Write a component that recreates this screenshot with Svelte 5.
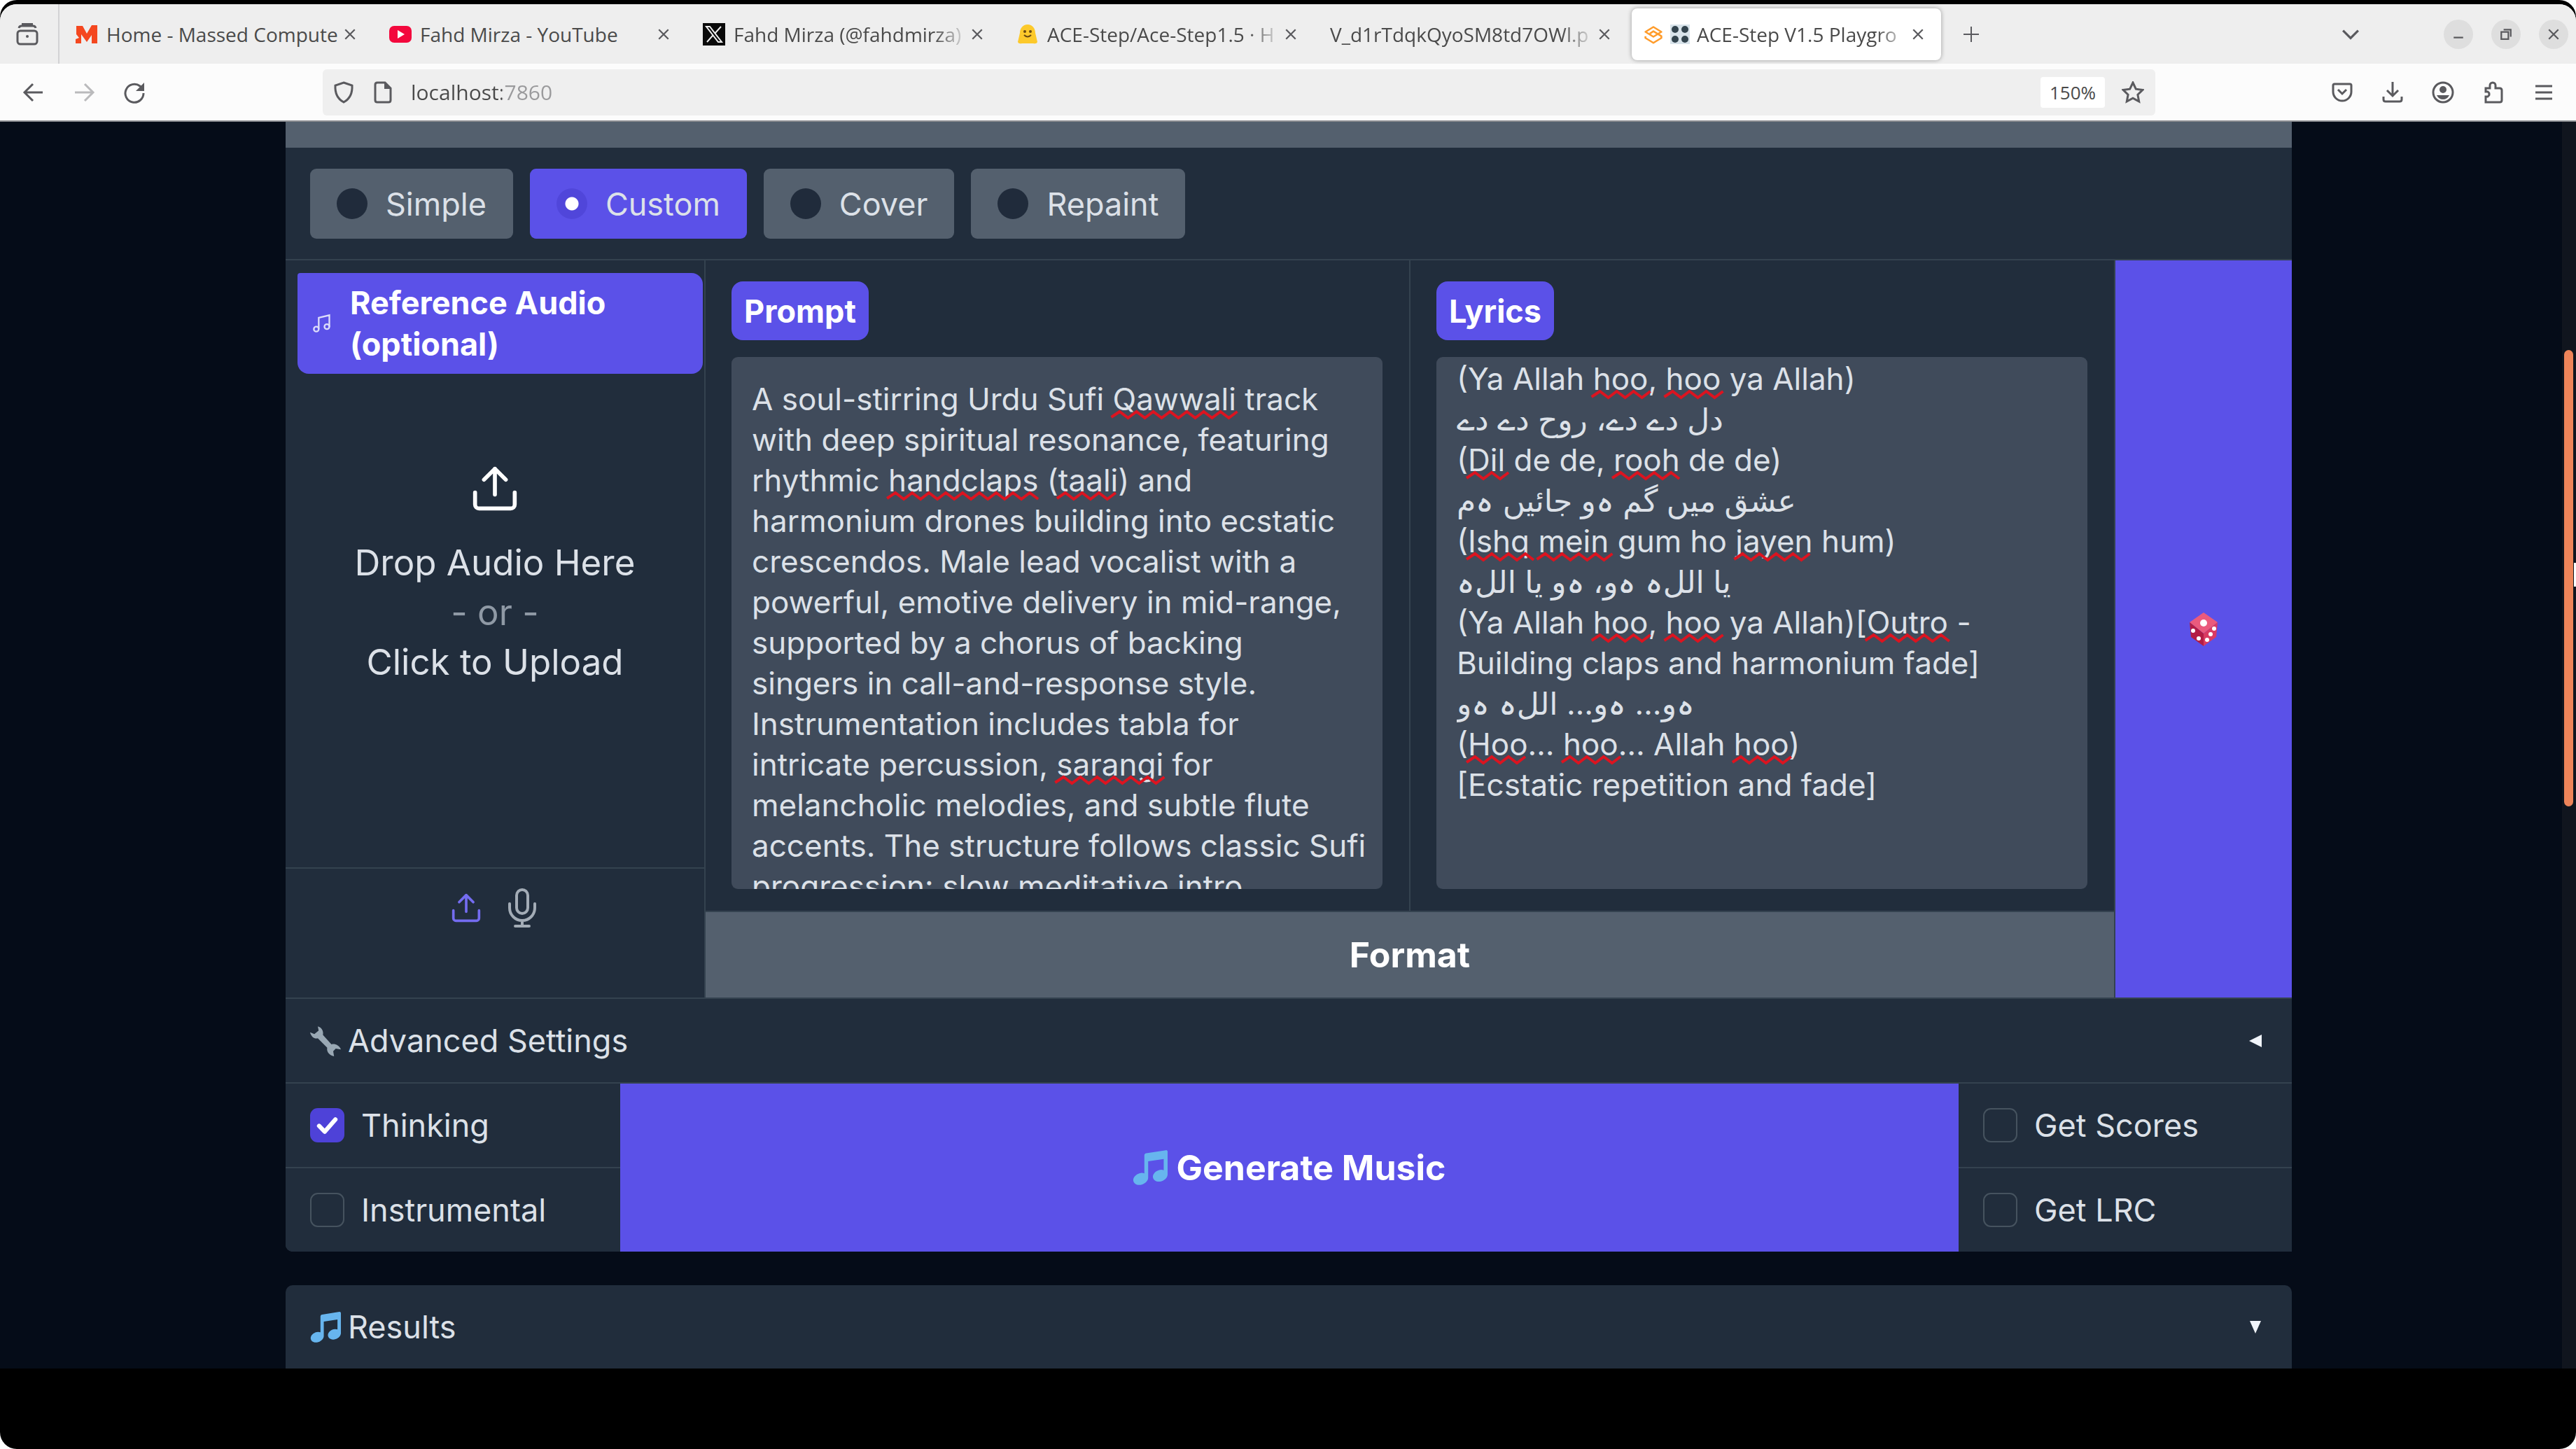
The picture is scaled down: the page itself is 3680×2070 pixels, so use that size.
<script lang="ts">
  import { onMount } from 'svelte';

  type Mark = { x: number; y: number; w: number };

  const LINE = 58;
  const TEXT_FONT = '44px Inter';

  const tabs = [
    { title: 'Home - Massed Compute', icon: 'massed' },
    { title: 'Fahd Mirza - YouTube', icon: 'youtube' },
    { title: 'Fahd Mirza (@fahdmirza)', icon: 'x', fade: true },
    { title: 'ACE-Step/Ace-Step1.5 · H', icon: 'hugging', fade: true },
    { title: 'V_d1rTdqkQyoSM8td7OWl.p', icon: '', fade: true },
    { title: 'ACE-Step V1.5 Playgro', icon: 'ace', fade: true, active: true },
  ];

  const modes = ['Simple', 'Custom', 'Cover', 'Repaint'];
  let mode = $state('Custom');

  // words between ~ get the spell-check squiggle
  const promptLines = [
    'A soul-stirring Urdu Sufi ~Qawwali~ track',
    'with deep spiritual resonance, featuring',
    'rhythmic ~handclaps~ (~taali~) and',
    'harmonium drones building into ecstatic',
    'crescendos. Male lead vocalist with a',
    'powerful, emotive delivery in mid-range,',
    'supported by a chorus of backing',
    'singers in call-and-response style.',
    'Instrumentation includes tabla for',
    'intricate percussion, ~sarangi~ for',
    'melancholic melodies, and subtle flute',
    'accents. The structure follows classic Sufi',
    'progression: slow meditative intro,',
  ];

  const lyricLines = [
    '(Ya Allah ~hoo~, ~hoo~ ya Allah)',
    'دل دے دے، روح دے دے',
    '(~Dil~ de de, ~rooh~ de de)',
    'عشق میں گم ہو جائیں ہم',
    '(~Ishq~ ~mein~ gum ho ~jayen~ hum)',
    'یا اللہ ہو، ہو یا اللہ',
    '(Ya Allah ~hoo~, ~hoo~ ya Allah)[~Outro~ -',
    'Building claps and harmonium fade]',
    'ہو… ہو… اللہ ہو',
    '(~Hoo~… ~hoo~… Allah ~hoo~)',
    '[Ecstatic repetition and fade]',
  ];

  // the heh is set unjoined, with a non-joiner on both sides
  const plain = (lines: string[]) =>
    lines.join('\n').replaceAll('~', '').replaceAll('ہ', '\u200cہ\u200c');

  let prompt = $state(plain(promptLines));
  let lyrics = $state(plain(lyricLines));
  let promptMarks: Mark[] = $state([]);
  let lyricMarks: Mark[] = $state([]);

  let thinking = $state(true);
  let instrumental = $state(false);
  let scores = $state(false);
  let lrc = $state(false);

  function measureMarks(lines: string[]): Mark[] {
    const ctx = document.createElement('canvas').getContext('2d');
    if (!ctx) return [];
    ctx.font = TEXT_FONT;
    const marks: Mark[] = [];
    lines.forEach((line, row) => {
      let before = '';
      line.split('~').forEach((part, i) => {
        if (i % 2) {
          marks.push({ x: ctx.measureText(before).width, y: row * LINE + 46, w: ctx.measureText(part).width });
        }
        before += part;
      });
    });
    return marks;
  }

  // zigzag from x to x + w, 24px per wave
  function zigzag({ x, y, w }: Mark) {
    let d = `M${x - 2} ${y + 9}`;
    for (let dx = 10, up = true; dx <= w + 6; dx += 12, up = !up) d += `L${x + dx} ${up ? y + 1 : y + 10}`;
    return d;
  }

  onMount(() => {
    promptMarks = measureMarks(promptLines);
    lyricMarks = measureMarks(lyricLines);
  });
</script>

{#snippet squiggles(marks: Mark[])}
  <svg class="squiggles" aria-hidden="true">
    {#each marks as mark}
      <path d={zigzag(mark)} />
    {/each}
  </svg>
{/snippet}

{#snippet notes()}
  <svg class="emoji" viewBox="0 0 36 36" aria-hidden="true">
    <path fill="#67b5ee" d="M34.2 0.1 14 3.2c-1 .2-1.9 1-1.9 2.1v18.6a8 8 0 0 0-4.600-.2C3 25 0 28.400.8 31.900c.8 3.300 4.700 4.800 8.800 3.500 3.700-1.200 6.400-4.200 6.400-7V11.500l16-2.400v11.600a8 8 0 0 0-4.600-.2c-4.300 1.200-7.200 4.700-6.400 8 .8 3.300 4.700 4.800 8.800 3.500 3.700-1.200 6.200-4.100 6.200-7V1.700C36 .6 35.200-.1 34.200.1z" />
  </svg>
{/snippet}

{#snippet uploadIcon()}
  <svg viewBox="0 0 24 24" aria-hidden="true">
    <path d="M12 15V2M6.500 7.500 12 2l5.500 5.500M2 14v6a2 2 0 0 0 2 2h16a2 2 0 0 0 2-2v-6" />
  </svg>
{/snippet}

{#snippet tick()}
  <svg class="tick" viewBox="0 0 16 16" aria-hidden="true">
    <path d="m4.200 8.300 2.600 2.700 5-5.700" />
  </svg>
{/snippet}

{#snippet closeIcon()}
  <svg viewBox="0 0 16 16" aria-hidden="true"><path d="m2 2 12 12M14 2 2 14" /></svg>
{/snippet}

<div class="screen">
  <header>
    <div class="tabbar">
      <button class="firefox-view" aria-label="Recent browsing">
        <svg viewBox="0 0 32 32">
          <rect x="2" y="11" width="28" height="19" rx="4" />
          <path d="M4 7a4 4 0 0 1 4-3h16a4 4 0 0 1 4 3M8 1h16" />
          <circle class="dot" cx="16" cy="19" r="2" />
        </svg>
      </button>
      <div class="tabs">
        {#each tabs as tab}
          <div class="tab" class:active={tab.active} class:fade={tab.fade}>
            {#if tab.icon === 'massed'}
              <svg class="favicon" viewBox="0 0 32 32"><path fill="#f4471f" d="M1 4h9l6 11 7-12h8v26h-8V17l-7 10L8 16v13H0v-6l5-2-4-5z" /></svg>
            {:else if tab.icon === 'youtube'}
              <svg class="favicon" viewBox="0 0 32 32"><rect x="0" y="4" width="32" height="24" rx="7" fill="#f3083d" /><path fill="#fff" d="m12 10 10 6-10 6z" /></svg>
            {:else if tab.icon === 'x'}
              <svg class="favicon" viewBox="0 0 32 32"><rect width="32" height="32" fill="#0a0a0a" /><path fill="none" stroke="#eee" stroke-width="2" d="M5 5h5l17 22h-5zM26 5 17 15M14 18 6 27" /></svg>
            {:else if tab.icon === 'hugging'}
              <svg class="favicon" viewBox="0 0 32 32"><path fill="#fcc92b" d="M16 2C9 2 5 8 5 14l-3 13q1 3 6 2h16q5 1 6-2l-3-13C27 8 23 2 16 2z" /><circle cx="12" cy="12" r="2" fill="#6b4a10" /><circle cx="20" cy="12" r="2" fill="#6b4a10" /><path fill="none" stroke="#6b4a10" stroke-width="2" d="M11 17q5 5 10 0" /></svg>
            {:else if tab.icon === 'ace'}
              <svg class="favicon" viewBox="0 0 32 32"><g fill="none" stroke="#ff9c2b" stroke-width="3" stroke-linejoin="round"><path d="m3 12 13-8 13 8-13 8z" /><path d="m10 15 6-4 13 8v3l-13 8-13-8v-3" /></g></svg>
              <svg class="knobs" viewBox="0 0 28 28"><rect width="28" height="28" fill="#d8e3ea" /><g fill="#33444e"><circle cx="7" cy="7" r="5" /><circle cx="21" cy="7" r="5" /><circle cx="7" cy="21" r="5" /><circle cx="21" cy="21" r="5" /></g></svg>
            {/if}
            <button class="tab-title">{tab.title}</button>
            <button class="tab-close" aria-label="Close tab">{@render closeIcon()}</button>
          </div>
        {/each}
      </div>
      <button class="new-tab" aria-label="New tab">
        <svg viewBox="0 0 24 24"><path d="M12 1v22M1 12h22" /></svg>
      </button>
      <button class="all-tabs" aria-label="List all tabs">
        <svg viewBox="0 0 24 24"><path d="m2 7 10 10L22 7" /></svg>
      </button>
      <div class="window-controls">
        <button aria-label="Minimise"><svg viewBox="0 0 16 16"><path d="M2 12h12" /></svg></button>
        <button aria-label="Restore"><svg viewBox="0 0 16 16"><path d="M2 5h9v9H2zM5 2h9v9" /></svg></button>
        <button aria-label="Close window">{@render closeIcon()}</button>
      </div>
    </div>

    <div class="toolbar">
      <div class="nav">
        <button aria-label="Back"><svg viewBox="0 0 32 32"><path d="M29 16H4M15 4 3 16l12 12" /></svg></button>
        <button class="off" aria-label="Forward"><svg viewBox="0 0 32 32"><path d="M3 16h25M17 4l12 12-12 12" /></svg></button>
        <button aria-label="Reload"><svg viewBox="0 0 32 32"><path d="M29 17a13 13 0 1 1-5-10l5 5" /><path class="solid" d="M30 2v12H18z" /></svg></button>
      </div>
      <div class="urlbar">
        <svg viewBox="0 0 32 32" aria-hidden="true"><path d="m16 2 12 4q1 17-12 24Q3 23 4 6z" /></svg>
        <svg viewBox="0 0 32 32" aria-hidden="true"><path d="M5 5q0-3 3-3h11l8 8v17q0 3-3 3H8q-3 0-3-3z" /><path class="solid" d="M18 2v9h9z" /></svg>
        <input type="text" aria-label="Address" value="localhost:7860" />
        <button class="zoom">150%</button>
        <button class="star" aria-label="Bookmark this page">
          <svg viewBox="0 0 32 32"><path d="m16 2 4.300 9.200 9.700 1.200-7.100 6.800 1.800 9.800-8.700-4.800L7.300 29l1.800-9.800L2 12.400l9.700-1.200z" /></svg>
        </button>
      </div>
      <div class="tools">
        <button aria-label="Pocket"><svg viewBox="0 0 32 32"><path d="M5 4h22q2 0 2 2v9a13 13 0 0 1-26 0V6q0-2 2-2zM10 12l6 6 6-6" /></svg></button>
        <button aria-label="Downloads"><svg viewBox="0 0 32 32"><path d="M16 1v20M8 13l8 8 8-8M3 22v4q0 3 3 3h20q3 0 3-3v-4" /></svg></button>
        <button aria-label="Account"><svg viewBox="0 0 32 32"><circle cx="16" cy="16" r="14" /><circle class="solid" cx="16" cy="12" r="5" /><path class="solid" d="M7 20h18q-3 6-9 6t-9-6z" /></svg></button>
        <button aria-label="Extensions"><svg viewBox="0 0 32 32"><path d="M5 10h6V6a4 4 0 0 1 8 0v4h6q3 0 3 3v14q0 3-3 3H5v-8h3a4 4 0 0 0 0-7H5z" /></svg></button>
        <button aria-label="Menu"><svg viewBox="0 0 32 32"><path d="M4 7h24M4 16h24M4 25h24" /></svg></button>
      </div>
    </div>
  </header>

  <div class="viewport">
    <main>
      <section class="panel">
        <div class="strip"></div>

        <div class="modes" role="radiogroup" aria-label="Generation mode">
          {#each modes as name}
            <label class="mode" class:selected={mode === name}>
              <input type="radio" name="mode" value={name} bind:group={mode} />
              {name}
            </label>
          {/each}
        </div>

        <div class="workspace">
          <div class="audio">
            <div class="audio-label">
              <svg viewBox="0 0 24 24" aria-hidden="true"><path d="M8 19V5l13-3v14" /><circle cx="5" cy="19" r="3" /><circle cx="18" cy="16" r="3" /></svg>
              <span>Reference Audio (optional)</span>
            </div>
            <button class="dropzone">
              {@render uploadIcon()}
              <span>Drop Audio Here</span>
              <span class="or">- or -</span>
              <span>Click to Upload</span>
            </button>
            <div class="sources">
              <button class="source current" aria-label="Upload file">{@render uploadIcon()}</button>
              <button class="source mic" aria-label="Record audio">
                <svg viewBox="0 0 20 28"><rect x="6" y="1" width="8" height="17" rx="4" /><path d="M1 11v3a9 9 0 0 0 18 0v-3M10 23v4M5 27h10" /></svg>
              </button>
            </div>
          </div>

          <div class="editors">
            <div class="editor">
              <label class="badge" for="prompt">Prompt</label>
              <div class="box">
                <textarea id="prompt" wrap="off" spellcheck="false" bind:value={prompt}></textarea>
                {@render squiggles(promptMarks)}
              </div>
            </div>
            <div class="editor">
              <label class="badge" for="lyrics">Lyrics</label>
              <div class="box scrolled">
                <textarea id="lyrics" wrap="off" spellcheck="false" bind:value={lyrics}></textarea>
                {@render squiggles(lyricMarks)}
              </div>
            </div>
            <button class="format">Format</button>
          </div>

          <button class="dice" aria-label="Random sample">
            <svg viewBox="0 0 40 48">
              <path fill="#ea5a7d" d="M20 0 40 14 20 30 0 14z" />
              <path fill="#b31c45" d="M0 14 20 30v18L2 35z" />
              <path fill="#d93a62" d="M40 14 20 30v18l18-13z" />
              <g fill="#fff"><circle cx="20" cy="15" r="5" /><circle cx="5" cy="26" r="3" /><circle cx="13" cy="37" r="3" /><circle cx="35" cy="23" r="3" /><circle cx="30" cy="31" r="3" /><circle cx="25" cy="39" r="3" /></g>
            </svg>
          </button>
        </div>

        <button class="accordion">
          <svg class="emoji" viewBox="0 0 36 36" aria-hidden="true">
            <path fill="#99a8b4" d="M9 1c4 1 7 5 6 10l10 11c4-1 9 1 11 6l-6-1-3 3 1 6c-6-1-9-6-8-10L9 15C5 16 1 13 0 8l5 2 5-4z" />
          </svg>
          <span>Advanced Settings</span>
          <svg class="arrow" viewBox="0 0 20 20" aria-hidden="true"><path d="M19 1v18L1 10z" /></svg>
        </button>

        <div class="actions">
          <div class="checks">
            <label class="check"><span class="checkbox"><input type="checkbox" bind:checked={thinking} />{#if thinking}{@render tick()}{/if}</span>Thinking</label>
            <label class="check"><span class="checkbox"><input type="checkbox" bind:checked={instrumental} />{#if instrumental}{@render tick()}{/if}</span>Instrumental</label>
          </div>
          <button class="generate">{@render notes()}Generate Music</button>
          <div class="checks">
            <label class="check"><span class="checkbox"><input type="checkbox" bind:checked={scores} />{#if scores}{@render tick()}{/if}</span>Get Scores</label>
            <label class="check"><span class="checkbox"><input type="checkbox" bind:checked={lrc} />{#if lrc}{@render tick()}{/if}</span>Get LRC</label>
          </div>
        </div>
      </section>

      <section class="results">
        <button class="accordion">
          {@render notes()}
          <span>Results</span>
          <svg class="arrow" viewBox="0 0 20 20" aria-hidden="true"><path d="M2 1h16l-8 18z" /></svg>
        </button>
      </section>
    </main>
    <div class="scrollbar"><div class="thumb"></div><div class="pointer"></div></div>
  </div>
</div>

<style>
  :global(body) { background: #fff; }

  .screen {
    --panel: #212d3c;
    --line: #34424f;
    --grey: #54606e;
    --accent: #5b51e8;
    --text: #dce1e8;
    padding: 6px 0 115px;
    background: #000;
    border-radius: 24px;
    overflow: hidden;
    font-family: Inter, "DejaVu Sans", sans-serif;
    font-size: 45px;
    color: var(--text);
  }

  button, input, textarea {
    font: inherit;
    color: inherit;
    margin: 0;
    padding: 0;
    border: 0;
    background: none;
    box-sizing: border-box;
  }
  button { display: flex; align-items: center; justify-content: center; }

  /* ---- browser chrome ---- */
  header {
    font-family: "Open Sans", sans-serif;
    font-size: 28px;
    color: #4a4a4a;
    background: #fcfcfc;
    border-bottom: 2px solid #8b8d91;
    border-radius: 24px 24px 0 0;
    overflow: hidden;
  }
  header svg { width: 32px; height: 32px; fill: none; stroke: #5a5a5e; stroke-width: 3; flex: none; }
  header .solid, header .dot { fill: #5a5a5e; stroke: none; }

  .tabbar { display: flex; align-items: center; height: 85px; background: #eee; }
  .firefox-view { width: 85px; height: 85px; border-right: 2px solid #d2d2d4; padding-right: 6px; }
  .tabs { display: flex; padding-left: 3px; }
  .tab {
    display: flex;
    align-items: center;
    gap: 12px;
    width: 442px;
    height: 74px;
    margin: 0 3px;
    padding: 0 24px 0 17px;
    box-sizing: border-box;
    border-radius: 8px;
  }
  .tab.active { gap: 10px; background: #fff; box-shadow: 0 0 6px rgba(0, 0, 0, .35); }
  .tab .favicon, .tab .knobs { stroke: none; }
  .tab .knobs, .tab.active .favicon { width: 28px; height: 28px; }
  .tab-title {
    flex: 1;
    min-width: 0;
    display: block;
    text-align: left;
    white-space: nowrap;
    overflow: hidden;
  }
  .fade .tab-title { mask-image: linear-gradient(to left, transparent, #000 48px); }
  .tab-close { margin-left: -8px; }
  .tab-close svg { width: 18px; height: 18px; stroke-width: 2; }
  .new-tab { width: 80px; }
  .new-tab svg { width: 24px; height: 24px; stroke-width: 2; }
  .all-tabs { margin-left: auto; }
  .all-tabs svg { width: 26px; height: 26px; }
  .window-controls { display: flex; gap: 26px; margin: 0 11px 0 120px; }
  .window-controls button { width: 42px; height: 42px; border-radius: 50%; background: #dedede; }
  .window-controls svg { width: 18px; height: 18px; stroke-width: 2; }

  .toolbar { display: flex; align-items: center; height: 81px; }
  .nav { display: flex; gap: 40px; padding-left: 32px; width: 429px; }
  .nav .off { opacity: .4; }
  .urlbar {
    flex: 1;
    display: flex;
    align-items: center;
    gap: 24px;
    height: 66px;
    padding: 0 16px 0 14px;
    background: #efefef;
    border-radius: 6px;
  }
  .urlbar input {
    flex: 1;
    min-width: 0;
    font-size: 30px;
    color: transparent;
    background: linear-gradient(90deg, #4a4a4a 130px, #9a9a9c 130px);
    background-clip: text;
  }
  .zoom { width: 92px; height: 44px; background: #fff; border-radius: 4px; font-size: 26px; }
  .tools { display: flex; gap: 40px; padding: 0 30px 0 251px; }

  /* ---- page ---- */
  .viewport { display: flex; background: #050c18; }
  main { flex: 1; min-width: 0; padding: 0 386px 0 408px; }

  .panel { background: var(--line); border-radius: 0 0 0 10px; overflow: hidden; display: grid; gap: 2px; }
  .strip { height: 37px; margin-bottom: -2px; background: var(--grey); }

  .modes { display: flex; gap: 24px; padding: 30px 35px 29px; background: var(--panel); }
  .mode {
    display: flex;
    align-items: center;
    gap: 26px;
    height: 100px;
    padding: 0 38px;
    border-radius: 9px;
    background: var(--grey);
  }
  .mode.selected { background: var(--accent); }
  .mode input { appearance: none; width: 44px; height: 44px; border-radius: 50%; background: #202b3b; }
  .mode input:checked { background: radial-gradient(circle, #fff 9px, #5046da 10px); }

  .workspace { display: grid; grid-template-columns: 598px minmax(0, 1fr) 252px; gap: 2px; }

  .audio { display: flex; flex-direction: column; background: var(--panel); padding-top: 18px; }
  .audio-label {
    display: flex;
    align-items: center;
    gap: 26px;
    margin: 0 2px 0 17px;
    padding: 13px 90px 13px 21px;
    line-height: 59px;
    font-weight: 700;
    color: #fff;
    background: var(--accent);
    border-radius: 4px 16px 16px 16px;
  }
  .audio-label svg { width: 28px; height: 28px; flex: none; fill: none; stroke: #dcdcfa; stroke-width: 2; }
  .dropzone { flex: 1; flex-direction: column; line-height: 71px; font-size: 51px; padding-bottom: 128px; }
  .dropzone svg { width: 68px; height: 68px; margin-bottom: 36px; fill: none; stroke: #fff; stroke-width: 2; stroke-linecap: round; stroke-linejoin: round; }
  .dropzone .or { color: #8f99a5; }
  .sources {
    display: flex;
    justify-content: center;
    align-items: flex-start;
    gap: 38px;
    height: 186px;
    padding: 28px 4px 0 0;
    box-sizing: border-box;
    border-top: 2px solid var(--line);
  }
  .source { height: 56px; }
  .source svg { width: 44px; height: 44px; fill: none; stroke: #a3acb6; stroke-width: 2; stroke-linejoin: round; stroke-linecap: round; }
  .source.current svg { stroke: #746cf0; }
  .source.mic svg { width: 40px; height: 56px; }

  .editors { display: grid; grid-template-columns: 1fr 1fr; gap: 2px; }
  .editor { background: var(--panel); padding: 30px 38px 31px 37px; }
  .badge {
    display: inline-flex;
    align-items: center;
    height: 84px;
    padding: 0 18px;
    margin-bottom: 24px;
    font-weight: 700;
    color: #fff;
    background: var(--accent);
    border-radius: 16px;
  }
  .box { position: relative; height: 760px; padding: 31px 0 0 29px; box-sizing: border-box; border-radius: 9px; background: #404b5b; overflow: hidden; }
  .box.scrolled { padding-top: 2px; }
  .box textarea {
    display: block;
    width: 100%;
    height: 100%;
    resize: none;
    overflow: hidden;
    outline: 0;
    font-size: 44px;
    line-height: 58px;
  }
  .squiggles { position: absolute; top: 31px; left: 29px; width: 100%; height: 100%; pointer-events: none; fill: none; stroke: #dc1420; stroke-width: 4; }
  .scrolled .squiggles { top: 2px; }
  .format { grid-column: span 2; height: 122px; font-size: 50px; font-weight: 700; color: #fff; background: var(--grey); }
  .dice { background: var(--accent); }
  .dice svg { width: 40px; height: 48px; }

  .accordion { width: 100%; justify-content: flex-start; gap: 10px; height: 119px; padding: 0 42px 0 35px; background: var(--panel); }
  .emoji { width: 44px; height: 44px; flex: none; }
  .arrow { width: 20px; height: 20px; margin-left: auto; fill: #f1f5fb; }

  .actions { display: grid; grid-template-columns: 478px minmax(0, 1fr) 476px; }
  .checks { display: grid; gap: 2px; }
  .check { display: flex; align-items: center; gap: 24px; height: 119px; padding: 0 35px; background: var(--panel); }
  .checkbox { display: grid; width: 49px; height: 49px; }
  .checkbox input { grid-area: 1 / 1; appearance: none; border: 2px solid #46535f; border-radius: 11px; }
  .checkbox input:checked { background: #4e42d8; border-color: #4e42d8; }
  .tick { grid-area: 1 / 1; pointer-events: none; fill: none; stroke: #fff; stroke-width: 2; stroke-linecap: round; stroke-linejoin: round; }
  .generate { gap: 12px; font-size: 50px; font-weight: 700; color: #fff; background: var(--accent); }
  .generate .emoji { width: 50px; height: 50px; }

  .results { margin-top: 48px; border-radius: 10px 10px 0 0; overflow: hidden; }

  .scrollbar { position: relative; width: 20px; background: #10151e; padding-top: 326px; box-sizing: border-box; }
  .thumb { width: 13px; height: 652px; margin-left: 3px; border-radius: 7px; background: #ee8459; }
  .pointer { position: absolute; right: 0; top: 630px; width: 3px; height: 34px; background: #fff; }
</style>
